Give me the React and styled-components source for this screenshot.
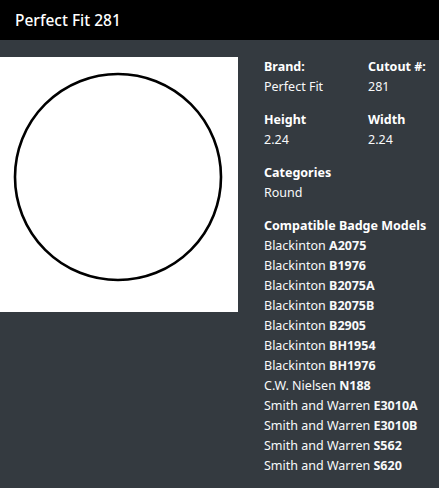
import styled, { createGlobalStyle } from 'styled-components'

const models = [
  ['Blackinton', 'A2075'],
  ['Blackinton', 'B1976'],
  ['Blackinton', 'B2075A'],
  ['Blackinton', 'B2075B'],
  ['Blackinton', 'B2905'],
  ['Blackinton', 'BH1954'],
  ['Blackinton', 'BH1976'],
  ['C.W. Nielsen', 'N188'],
  ['Smith and Warren', 'E3010A'],
  ['Smith and Warren', 'E3010B'],
  ['Smith and Warren', 'S562'],
  ['Smith and Warren', 'S620'],
]

const GlobalStyle = createGlobalStyle`
  html, body {
    margin: 0;
    background: #343a40;
    font-family: "Noto Sans", "Open Sans", sans-serif;
    color: #fff;
  }
`

export default function App() {
  return (
    <>
      <GlobalStyle />
      <Header>
        <Title>Perfect Fit 281</Title>
      </Header>
      <Main>
        <Preview>
          <svg width="238" height="255" viewBox="0 0 238 255">
            <circle cx="118" cy="120" r="103" fill="none" stroke="#000" strokeWidth="2.6" />
          </svg>
        </Preview>
        <Details>
          <Row>
            <Field>
              <Label>Brand:</Label>
              <Value>Perfect Fit</Value>
            </Field>
            <Field>
              <Label>Cutout #:</Label>
              <Value>281</Value>
            </Field>
          </Row>
          <Row>
            <Field>
              <Label>Height</Label>
              <Value>2.24</Value>
            </Field>
            <Field>
              <Label>Width</Label>
              <Value>2.24</Value>
            </Field>
          </Row>
          <Field>
            <Label>Categories</Label>
            <Value>Round</Value>
          </Field>
          <Field>
            <Label>Compatible Badge Models</Label>
            {models.map(([maker, code]) => (
              <Value key={code}>
                {maker} <b>{code}</b>
              </Value>
            ))}
          </Field>
        </Details>
      </Main>
    </>
  )
}

const Header = styled.header`
  height: 40px;
  background: #000;
  display: flex;
  align-items: center;
  padding: 0 15px;
`

const Title = styled.h1`
  margin: 0;
  font-size: 15.5px;
  font-weight: 500;
  color: #fff;
`

const Main = styled.main`
  display: flex;
  padding-top: 17px;
  gap: 26px;
`

const Preview = styled.div`
  width: 238px;
  height: 255px;
  background: #fff;
  flex-shrink: 0;
  svg {
    display: block;
  }
`

const Details = styled.section`
  display: flex;
  flex-direction: column;
  gap: 13px;
`

const Row = styled.div`
  display: grid;
  grid-template-columns: 104px auto;
`

const Field = styled.div`
  display: flex;
  flex-direction: column;
`

const Label = styled.div`
  font-size: 12.5px;
  line-height: 20px;
  font-weight: 700;
  white-space: nowrap;
`

const Value = styled.div`
  font-size: 12.5px;
  line-height: 20px;
  white-space: nowrap;
  color: #f8f9fa;
  b {
    font-weight: 700;
  }
`
